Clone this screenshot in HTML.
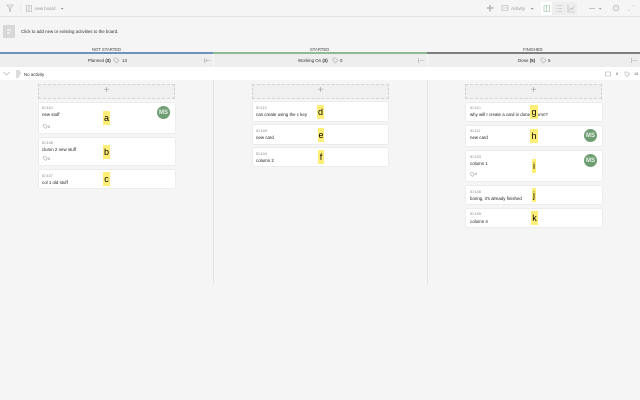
<!DOCTYPE html>
<html><head><meta charset="utf-8"><style>
html,body{margin:0;padding:0;width:640px;height:400px;overflow:hidden;background:#f5f5f5;font-family:"Liberation Sans",sans-serif;color:#333}
div,span,svg{position:absolute;box-sizing:border-box}
.t{font-size:4.4px;line-height:7px;white-space:nowrap}
.c{background:#fff;box-shadow:0 0 1px rgba(0,0,0,.18)}
.id{font-size:3.7px;color:#888;line-height:5px;white-space:nowrap}
.n{font-size:4.4px;line-height:7px;color:#222;white-space:nowrap}
.y{background:#ffee77;color:#000;font-size:9px;line-height:14px;text-align:center;overflow:visible}
.a{width:13px;height:13px;border-radius:50%;background:#6f9e72;color:#e8f0e8;font-size:6px;font-weight:bold;line-height:14px;text-align:center}
.add{background:#f0f0f0;border:1px dashed #d4d4d4;height:15px;top:84px;color:#aaa;font-size:10px;line-height:12px;text-align:center}
.h{top:54px;height:13px;background:#eeeeee}
.ht{font-size:4.4px;line-height:7px;top:57px;white-space:nowrap;color:#333}
.s{font-size:4.2px;line-height:6px;top:47px;color:#444;white-space:nowrap}
svg{fill:none;stroke:#aaa;stroke-width:.6}
</style></head><body>
<!-- top bar -->
<div style="left:0;top:0;width:640px;height:17px;background:#f5f5f5;border-bottom:1px solid #e2e2e2"></div>
<svg style="left:6px;top:4px" width="8" height="8"><path d="M1 1H7L4.6 4V7.5L3.4 6.8V4Z"/></svg>
<div style="left:20px;top:3px;width:1px;height:10px;background:#ebebeb"></div>
<svg style="left:26px;top:5px" width="7" height="7"><path d="M.5 .5H5.5V6.5H.5ZM3 .5V6.5"/></svg>
<div class="t" style="left:35px;top:4.5px;color:#999">new board</div>
<svg style="left:60px;top:6.5px" width="5" height="4"><path d="M.8 1H3.6L2.2 2.6Z" fill="#888" stroke="none"/></svg>

<svg style="left:486px;top:4px" width="8" height="8"><path d="M4 1V7.5M1 4H7.5" stroke="#b4b4b4" stroke-width="1.4"/></svg>
<svg style="left:501px;top:4px" width="8" height="8"><path d="M1 1.5H7M1 4H7M1 6.5H7M1 1.5V6.5M7 1.5V6.5" stroke="#b0b0b0"/></svg>
<div class="t" style="left:511px;top:4.5px;color:#999">Activity</div>
<svg style="left:530px;top:6.5px" width="5" height="4"><path d="M.8 1H3.6L2.2 2.6Z" fill="#888" stroke="none"/></svg>
<div style="left:541px;top:2px;width:11px;height:13px;background:#fff"></div>
<div style="left:552px;top:2px;width:25px;height:13px;background:#eeeeee"></div>
<svg style="left:543px;top:4px" width="8" height="9"><path d="M1 1.5H6.5V7.5H1ZM3.7 1.5V7.5" stroke="#8fbf94"/></svg>
<svg style="left:555px;top:4px" width="8" height="9"><path d="M1 1.5H2M3 1.5H7M1 4.5H2M3 4.5H7M1 7.5H2M3 7.5H7" stroke="#b4b4b4"/></svg>
<svg style="left:567px;top:4px" width="9" height="9"><path d="M1 1V8H8M2 6.5L4 4L5.5 5.5L7.5 2" stroke="#b4b4b4"/></svg>
<div style="left:589px;top:8px;width:6px;height:1px;background:#c4c4c4"></div>
<svg style="left:598px;top:6.5px" width="5" height="4"><path d="M.8 1H3.6L2.2 2.6Z" fill="#999" stroke="none"/></svg>
<svg style="left:612px;top:4px" width="8" height="8"><circle cx="4" cy="4" r="2.8"/><path d="M4 2.4V4.4"/></svg>
<svg style="left:627px;top:4px" width="8" height="8"><path d="M1.5 7L2.5 6M7 1L6 2" stroke="#bbb"/></svg>

<!-- add bar -->
<div style="left:3px;top:25px;width:12px;height:13px;background:#d8d8d8"></div>
<svg style="left:3px;top:25px" width="12" height="13"><path d="M4 5H8M4 8H7" stroke="#fff" stroke-width="1"/></svg>
<div class="t" style="left:21px;top:27.5px;color:#333">Click to add new or existing activities to the board.</div>

<!-- section headers -->
<div class="s" style="left:92px">NOT STARTED</div>
<div class="s" style="left:310px">STARTED</div>
<div class="s" style="left:523px">FINISHED</div>
<div style="left:0;top:52px;width:213px;height:2px;background:#6b94bd"></div>
<div style="left:213px;top:52px;width:214px;height:2px;background:#8dba8f"></div>
<div style="left:427px;top:52px;width:213px;height:2px;background:#7d7d7d"></div>

<!-- column headers -->
<div class="h" style="left:0;width:640px"></div>
<div style="left:213px;top:54px;width:1px;height:13px;background:#f8f8f8"></div>
<div style="left:427px;top:54px;width:1px;height:13px;background:#f8f8f8"></div>
<div class="ht" style="left:88px">Planned <b>(3)</b></div>
<svg style="left:113px;top:57px" width="7" height="7"><path d="M1 1H3.5L6 3.5L3.5 6L1 3.5Z"/></svg>
<div class="ht" style="left:122px">13</div>
<svg style="left:204px;top:57px" width="7" height="7"><path d="M.5 1V6M1.5 3.5H6.5M1.5 3.5L3 2.5M1.5 3.5L3 4.5"/></svg>
<div class="ht" style="left:298px">Working On <b>(3)</b></div>
<svg style="left:332px;top:57px" width="7" height="7"><path d="M1 1H3.5L6 3.5L3.5 6L1 3.5Z"/></svg>
<div class="ht" style="left:340px">0</div>
<svg style="left:418px;top:57px" width="7" height="7"><path d="M.5 1V6M1.5 3.5H6.5"/></svg>
<div class="ht" style="left:518px">Done <b>(5)</b></div>
<svg style="left:540px;top:57px" width="7" height="7"><path d="M1 1H3.5L6 3.5L3.5 6L1 3.5Z"/></svg>
<div class="ht" style="left:548px">5</div>
<svg style="left:631px;top:57px" width="7" height="7"><path d="M.5 1V6M1.5 3.5H6.5"/></svg>

<!-- swimlane -->
<div style="left:0;top:67px;width:640px;height:13px;background:#fff"></div>
<svg style="left:3px;top:71px" width="7" height="5"><path d="M.5 1L3.5 4L6.5 1"/></svg>
<svg style="left:15px;top:70px" width="7" height="8"><path d="M1 1H5M1 3H6M1 5H5M1 7H4" stroke="#777"/></svg>
<div class="t" style="left:24px;top:70.5px;color:#333">No activity</div>
<svg style="left:605px;top:71px" width="6" height="6"><path d="M.5 1H5.5V5H.5Z"/></svg>
<div class="t" style="left:616px;top:70.5px;font-size:3.8px;color:#666">8</div>
<svg style="left:624px;top:71px" width="6" height="6"><path d="M1 1H3.5L5.5 3L3 5.5L1 3Z"/></svg>
<div class="t" style="left:634px;top:70.5px;font-size:3.8px;color:#666">18</div>

<!-- dividers -->
<div style="left:213px;top:80px;width:1px;height:205px;background:#e4e4e4"></div>
<div style="left:427px;top:80px;width:1px;height:205px;background:#e4e4e4"></div>

<!-- add buttons -->
<div class="add" style="left:38px;width:137px">+</div>
<div class="add" style="left:252px;width:137px">+</div>
<div class="add" style="left:465px;width:137px">+</div>

<!-- col 1 -->
<div class="c" style="left:39px;top:103px;width:136px;height:30px"></div>
<div class="id" style="left:42px;top:105.5px">ID:110</div>
<div class="n" style="left:42px;top:111px">new stuff</div>
<svg style="left:43px;top:124px" width="5" height="5"><path d="M.5 .5H2.6L4.5 2.5L2.5 4.5L.5 2.5Z"/></svg>
<div class="id" style="left:48px;top:124.5px">8</div>
<div class="a" style="left:157px;top:106px">MS</div>
<div class="y" style="left:103px;top:111px;width:7px;height:14px">a</div>

<div class="c" style="left:39px;top:138px;width:136px;height:27px"></div>
<div class="id" style="left:42px;top:141px">ID:106</div>
<div class="n" style="left:42px;top:146px">clumn 2 new stuff</div>
<svg style="left:43px;top:156px" width="5" height="5"><path d="M.5 .5H2.6L4.5 2.5L2.5 4.5L.5 2.5Z"/></svg>
<div class="id" style="left:48px;top:156.5px">8</div>
<div class="y" style="left:103px;top:145px;width:7px;height:14px">b</div>

<div class="c" style="left:39px;top:170px;width:136px;height:18px"></div>
<div class="id" style="left:42px;top:173.5px">ID:107</div>
<div class="n" style="left:42px;top:179px">col 1 old stuff</div>
<div class="y" style="left:103px;top:172px;width:7px;height:14px">c</div>

<!-- col 2 -->
<div class="c" style="left:253px;top:102px;width:135px;height:19px"></div>
<div class="id" style="left:256px;top:105.5px">ID:113</div>
<div class="n" style="left:256px;top:111px">can create using the c key</div>
<div class="y" style="left:317px;top:105px;width:7px;height:14px">d</div>

<div class="c" style="left:253px;top:125px;width:135px;height:19px"></div>
<div class="id" style="left:256px;top:128.5px">ID:109</div>
<div class="n" style="left:256px;top:134px">new card</div>
<div class="y" style="left:318px;top:128px;width:6px;height:14px">e</div>

<div class="c" style="left:253px;top:148px;width:135px;height:18px"></div>
<div class="id" style="left:256px;top:151.5px">ID:104</div>
<div class="n" style="left:256px;top:156.5px">column 2</div>
<div class="y" style="left:318px;top:150px;width:6px;height:14px">f</div>

<!-- col 3 -->
<div class="c" style="left:466px;top:103px;width:136px;height:18px"></div>
<div class="id" style="left:470px;top:105.5px">ID:110</div>
<div class="n" style="left:470px;top:111px">why will I create a card in done column?</div>
<div class="y" style="left:530px;top:105px;width:8px;height:14px">g</div>

<div class="c" style="left:466px;top:126px;width:136px;height:20px"></div>
<div class="id" style="left:470px;top:128.5px">ID:111</div>
<div class="n" style="left:470px;top:134px">new card</div>
<div class="y" style="left:530px;top:129px;width:8px;height:14px">h</div>
<div class="a" style="left:584px;top:129px">MS</div>

<div class="c" style="left:466px;top:151px;width:136px;height:30px"></div>
<div class="id" style="left:470px;top:154.5px">ID:103</div>
<div class="n" style="left:470px;top:159.5px">column 1</div>
<svg style="left:470px;top:172px" width="5" height="5"><path d="M.5 .5H2.6L4.5 2.5L2.5 4.5L.5 2.5Z"/></svg>
<div class="id" style="left:475px;top:172px">5</div>
<div class="y" style="left:532px;top:159px;width:4px;height:14px">i</div>
<div class="a" style="left:584px;top:154px">MS</div>

<div class="c" style="left:466px;top:186px;width:136px;height:18px"></div>
<div class="id" style="left:470px;top:189.5px">ID:108</div>
<div class="n" style="left:470px;top:195px">boring, it's already finished</div>
<div class="y" style="left:532px;top:188px;width:4px;height:14px">j</div>

<div class="c" style="left:466px;top:209px;width:136px;height:18px"></div>
<div class="id" style="left:470px;top:212px">ID:105</div>
<div class="n" style="left:470px;top:217.5px">column 4</div>
<div class="y" style="left:531px;top:211px;width:7px;height:14px">k</div>
</body></html>
